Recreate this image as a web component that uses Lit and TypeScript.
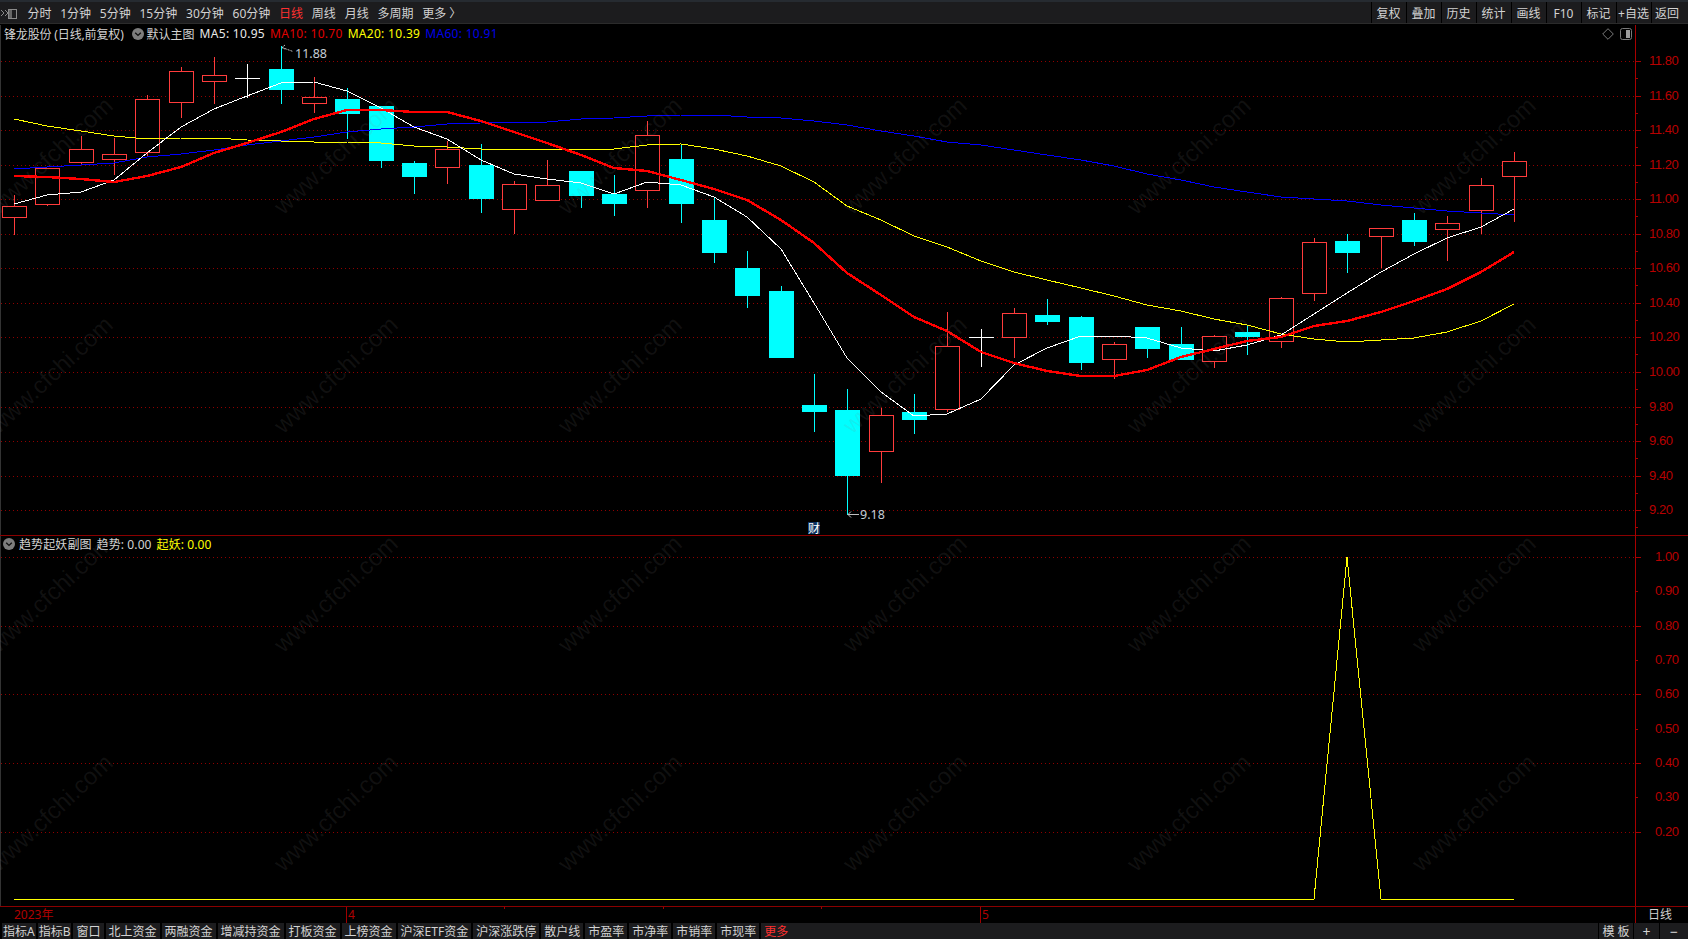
import { LitElement, html, css, svg } from "lit";
import { customElement } from "lit/decorators.js";

type C = [number, number, number, number, number]; // kind(0 red,1 cyan,2 cross), bodyTop, bodyBottom, wickTop, wickBottom
const candles: C[] = [
  [0,206,217,195,235],[0,168,204,168,206],[0,149,162,136,165],[0,154,159,138,175],[0,99,152,95,157],
  [0,71,102,67,118],[0,75,81,57,104],[2,78,78,64,98],[1,69,90,46,104],[0,97,103,77,113],
  [1,99,114,88,139],[1,106,161,106,168],[1,163,177,161,194],[0,149,167,141,184],[1,165,199,144,213],
  [0,184,209,181,234],[0,185,200,160,200],[1,171,196,171,208],[1,194,204,175,216],[0,135,190,121,208],
  [1,159,204,145,223],[1,220,253,197,263],[1,268,296,251,308],[1,291,358,286,358],[1,405,412,374,432],
  [1,410,476,389,515],[0,415,451,408,483],[1,412,420,394,434],[0,346,409,312,412],[2,337,337,329,367],
  [0,313,337,308,358],[1,315,322,299,325],[1,317,363,316,370],[0,344,359,342,379],[1,327,349,327,358],
  [1,344,360,327,360],[0,336,361,335,368],[1,332,337,325,355],[0,298,341,297,348],[0,242,293,238,301],
  [1,241,253,234,273],[0,228,236,228,268],[1,220,242,213,246],[0,223,229,216,261],[0,185,210,178,234],
  [0,161,176,152,222],
];
const ma5 = [204,195,192,180,153,127,109,96,83,82,91,108,127,139,160,174,179,183,194,182,185,197,217,249,303,358,392,416,414,399,365,348,336,336,338,348,351,345,335,314,293,272,254,238,227,209];
const ma10 = [176,177,179,182,176,167,153,143,132,119,110,110,112,112,121,132,143,155,168,171,180,189,200,220,243,273,295,317,331,352,363,371,376,376,370,357,349,341,337,326,321,312,301,289,272,252];
const ma20 = [119,126,131,136,139,138,138,140,141,142,142,143,146,147,149,149,149,149,149,145,144,149,156,166,182,206,220,236,247,261,272,280,288,296,305,311,319,325,334,339,342,340,338,332,321,304];
const ma60 = [169,167,165,163,157,154,150,145,141,137,132,129,127,124,123,122,122,119,118,116,115,115,117,118,121,125,131,136,142,145,150,155,160,166,174,180,187,192,197,199,201,205,208,211,213,215];

const cx = (i: number) => Math.floor(14.5 + (100 / 3) * i);
const pts = (a: number[]) => a.map((y, i) => `${cx(i)},${y}`).join(" ");

const mainLabels = ["11.80","11.60","11.40","11.20","11.00","10.80","10.60","10.40","10.20","10.00","9.80","9.60","9.40","9.20"];
const mainY = (i: number) => Math.round(61 + 34.56 * i);
const subLabels = ["1.00","0.90","0.80","0.70","0.60","0.50","0.40","0.30","0.20"];
const subY = (i: number) => Math.round(557 + 34.33 * i);
const markX = [53, 338, 622, 907, 1191, 1476];

const watermark = (ys: number[]) =>
  ys.map((y) =>
    markX.map(
      (x) => svg`<text class="mark" x=${x} y=${y + 5} text-anchor="middle" transform="rotate(-43 ${x} ${y})">www.cfchi.com</text>`
    )
  );

const chevron = html`<svg class="chev" viewBox="0 0 12 12"><circle cx="6" cy="6" r="6" fill="#7d7d7d"></circle><path d="M3.2 4.8 6 7.4 8.8 4.8" fill="none" stroke="#111" stroke-width="1.4"></path></svg>`;

@customElement("app-root")
export class AppRoot extends LitElement {
  static styles = css`
    :host { display: flex; flex-direction: column; width: 1688px; height: 939px; background: #000; overflow: hidden;
      font-family: "Noto Sans", "Noto Sans CJK SC", sans-serif; font-size: 12px; color: #d2d2d2; }
    .topstrip { height: 2px; background: #262b31; flex: none; }
    .topbar { height: 21px; flex: none; background: #1c1c1e; display: flex; align-items: center; }
    .topline { height: 2px; flex: none; background: #000; border-top: 1px solid #2b2b2b; box-sizing: border-box; }
    .logo { width: 18px; height: 12px; margin: 2px 5px 0 0; flex: none; }
    .t { padding: 2px 4.4px 0; white-space: nowrap; line-height: 19px; }
    .red { color: #ff3030; }
    .right { margin-left: auto; display: flex; height: 100%; padding-right: 6px; }
    .rb { width: 33px; margin-left: 1px; padding-top: 2px; text-align: center; line-height: 19px; border-left: 1px solid #000; white-space: nowrap; overflow: hidden; }
    .rb.last { width: 30px; }
    .pane { position: relative; flex: none; }
    .pane svg.chart { display: block; }
    .main { height: 510px; }
    .sub { height: 371px; }
    .legend { position: absolute; left: 4px; top: 0; height: 17px; display: flex; align-items: center; white-space: nowrap; }
    .sub .legend { left: 3px; top: 0; }
    .legend span { margin-right: 5px; letter-spacing: 0.3px; }
    .sub .legend span { letter-spacing: 0.1px; }
    .legend .name { letter-spacing: -0.15px; margin-right: 1.5px; }
    .legend .cn { letter-spacing: 0; }
    .chev { width: 12px; height: 12px; margin: 0 3px 0 6.5px; flex: none; }
    .sub .chev { margin: 0 4px 0 0; }
    .lw { color: #e8e8e8; }
    .lr { color: #e00000; }
    .ly { color: #ffff00; }
    .lb { color: #0000e8; }
    .tools { position: absolute; right: 56px; top: 3px; display: flex; gap: 6px; align-items: center; }
    .tools svg { display: block; }
    .dates { height: 17px; flex: none; position: relative; border-top: 1px solid #8a0000; box-sizing: border-box; display: flex; line-height: 15px; color: #b00000; }
    .dateaxis { width: 1635px; position: relative; flex: none; display: flex; }
    .y { margin-left: 14px; width: 332px; }
    .seg { width: 634px; flex: none; border-left: 1px solid #a00000; padding-left: 1px; box-sizing: border-box; }
    .tk { position: absolute; top: 0; width: 1px; height: 2px; background: #a00000; }
    .dayl { width: 48px; flex: none; border-left: 1px solid #a00000; text-align: center; color: #d0d0d0; }
    .bottom { height: 16px; flex: none; background: #1c1c1e; display: flex; line-height: 18px; overflow: hidden; }
    .bl { display: flex; background: #000; padding-left: 2px; gap: 2px; }
    .b { padding: 0 3px; background: #1c1c1e; white-space: nowrap; }
    .b.tight { padding: 0 1px; }
    .br { margin-left: auto; display: flex; }
    .br div { border-left: 1px solid #000; text-align: center; }
    .mo { width: 34px; }
    .pm { width: 25px; font-size: 14px; }
    .pmend { width: 28px; }
    .grid { stroke: #900000; stroke-width: 1; stroke-dasharray: 1 3; }
    .ax { stroke: #a80000; stroke-width: 1; }
    .al { fill: #b80000; font: 13px "Liberation Sans", sans-serif; letter-spacing: -0.45px; }
    .mark { fill: rgba(128, 128, 128, 0.13); font: 24px "Liberation Sans", sans-serif; }
    .pl { fill: none; shape-rendering: crispEdges; }
    .c-w { stroke: #fff; stroke-width: 1; }
    .c-r { stroke: #ff0000; stroke-width: 2.4; }
    .c-y { stroke: #ffff00; stroke-width: 1; }
    .c-b { stroke: #0000ff; stroke-width: 1; }
    .note { fill: #c6ced6; font: 12.5px "Noto Sans", sans-serif; }
    .arrow { fill: none; stroke: #c0c0c0; stroke-width: 1; }
    .badge { fill: #0d3160; }
    .bt { fill: #fff; font: 12px "Noto Sans CJK SC", sans-serif; }
    .cand { shape-rendering: crispEdges; }
  `;

  private candle(c: C, i: number) {
    const x = cx(i);
    const [k, t, b, wt, wb] = c;
    if (k === 2)
      return svg`<g class="cand"><rect x=${x} y=${wt} width="1" height=${wb - wt} fill="#fff"></rect><rect x=${x - 12} y=${t} width="25" height="1" fill="#fff"></rect></g>`;
    if (k === 1)
      return svg`<g class="cand"><rect x=${x} y=${wt} width="1" height=${wb - wt} fill="#00ffff"></rect><rect x=${x - 12} y=${t} width="25" height=${b - t} fill="#00ffff"></rect></g>`;
    return svg`<g class="cand"><rect x=${x} y=${wt} width="1" height=${wb - wt} fill="#ff3c3c"></rect><rect x=${x - 12 + 0.5} y=${t + 0.5} width="24" height=${b - t} fill="#000" stroke="#ff3c3c"></rect></g>`;
  }

  render() {
    const left = ["1分钟","5分钟","15分钟","30分钟","60分钟"];
    const bottom = ["北上资金","两融资金","增减持资金","打板资金","上榜资金","沪深ETF资金","沪深涨跌停","散户线","市盈率","市净率","市销率","市现率"];
    return html`
      <div class="topstrip"></div>
      <div class="topbar">
        <svg class="logo" viewBox="0 0 18 12"><path d="M1 2 4 5 1 8M5 2 8 5 5 8" fill="none" stroke="#8a8a8a" stroke-width="1"></path><rect x="8.5" y="1.5" width="8" height="9" fill="none" stroke="#8a8a8a"></rect><rect x="9" y="2" width="3" height="8" fill="#666"></rect></svg>
        <div class="t">分时</div>
        ${left.map((t) => html`<div class="t">${t}</div>`)}
        <div class="t red">日线</div>
        <div class="t">周线</div><div class="t">月线</div><div class="t">多周期</div><div class="t">更多 〉</div>
        <div class="right">
          ${["复权","叠加","历史","统计","画线","F10","标记","+自选"].map((t) => html`<div class="rb">${t}</div>`)}
          <div class="rb last">返回</div>
        </div>
      </div>
      <div class="topline"></div>

      <div class="pane main">
        <svg class="chart" width="1688" height="510" viewBox="0 25 1688 510">
          <rect x="0" y="25" width="1" height="510" fill="#333"></rect>
          ${mainLabels.map((l, i) => svg`
            <line class="grid" x1="1" x2="1635" y1=${mainY(i) + 0.5} y2=${mainY(i) + 0.5}></line>
            <line class="ax" x1="1635" x2="1641" y1=${mainY(i) + 0.5} y2=${mainY(i) + 0.5}></line>
            <line class="ax" x1="1635" x2="1638" y1=${mainY(i) + 17.5} y2=${mainY(i) + 17.5}></line>
            <text class="al" x="1649" y=${mainY(i) + 4}>${l}</text>`)}
          <line class="ax" x1="1635.5" x2="1635.5" y1="25" y2="535"></line>
          ${candles.map((c, i) => this.candle(c, i))}
          <polyline class="pl c-y" points=${pts(ma20)}></polyline>
          <polyline class="pl c-b" points=${pts(ma60)}></polyline>
          <polyline class="pl c-w" points=${pts(ma5)}></polyline>
          <polyline class="pl c-r" points=${pts(ma10)}></polyline>
          <path class="arrow" d="M285 45 282 47.5 285 49M282 47.5 293 51.5" stroke-dasharray="2 1"></path>
          <text class="note" x="295" y="58">11.88</text>
          <path class="arrow" d="M859 514.5H848M851 511.5 848 514.5 851 517.5"></path>
          <text class="note" x="860" y="519">9.18</text>
          <rect class="badge" x="808" y="522" width="12" height="12"></rect>
          <text class="bt" x="808" y="532.5">财</text>
          ${watermark([158, 377])}
        </svg>
        <div class="legend">
          <span class="name">锋龙股份 (日线,前复权)</span>${chevron}
          <span class="cn">默认主图</span>
          <span class="lw">MA5: 10.95</span><span class="lr">MA10: 10.70</span><span class="ly">MA20: 10.39</span><span class="lb">MA60: 10.91</span>
        </div>
        <div class="tools">
          <svg width="12" height="12" viewBox="0 0 12 12"><path d="M6 .7 11.3 6 6 11.3 .7 6Z" fill="none" stroke="#7a7a7a"></path></svg>
          <svg width="12" height="12" viewBox="0 0 12 12"><rect x=".5" y=".5" width="11" height="11" rx="2" fill="none" stroke="#7a7a7a"></rect><rect x="6" y="2" width="4" height="8" fill="#9a9a9a"></rect></svg>
        </div>
      </div>

      <div class="pane sub">
        <svg class="chart" width="1688" height="371" viewBox="0 535 1688 371">
          <rect x="0" y="535" width="1" height="371" fill="#333"></rect>
          <rect x="0" y="535" width="1688" height="1" fill="#8a0000"></rect>
          ${subLabels.map((l, i) => svg`
            ${i % 2 === 0 ? svg`<line class="grid" x1="1" x2="1635" y1=${subY(i) + 0.5} y2=${subY(i) + 0.5}></line>` : ""}
            <line class="ax" x1="1635" x2=${i % 2 === 0 ? 1641 : 1638} y1=${subY(i) + 0.5} y2=${subY(i) + 0.5}></line>
            <text class="al" x="1655" y=${subY(i) + 4}>${l}</text>`)}
          <line class="ax" x1="1635.5" x2="1635.5" y1="535" y2="906"></line>
          <polyline class="pl c-y" points="14,899 ${cx(39)},899 ${cx(40)},557 ${cx(41)},899 1514,899"></polyline>
          ${watermark([596, 815])}
        </svg>
        <div class="legend">
          ${chevron}<span class="cn">趋势起妖副图</span><span>趋势: 0.00</span><span class="ly">起妖: 0.00</span>
        </div>
      </div>

      <div class="dates">
        <div class="dateaxis">
          <div class="y">2023年</div>
          <div class="seg">4</div>
          <div class="seg">5</div>
          ${[504, 663, 821].map((x) => html`<i class="tk" style="left:${x}px"></i>`)}
        </div>
        <div class="dayl">日线</div>
      </div>

      <div class="bottom">
        <div class="bl">
          <div class="b tight">指标A</div><div class="b tight">指标B</div><div class="b">窗口</div>
          ${bottom.map((t) => html`<div class="b">${t}</div>`)}
          <div class="b red">更多</div>
        </div>
        <div class="br">
          <div class="mo">模 板</div><div class="pm">+</div><div class="pmend pm">−</div>
        </div>
      </div>
    `;
  }
}
